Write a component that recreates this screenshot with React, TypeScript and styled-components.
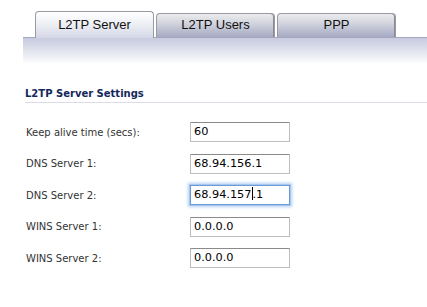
import React from 'react';
import styled, { createGlobalStyle } from 'styled-components';

const GlobalStyle = createGlobalStyle`
  html, body {
    margin: 0;
    padding: 0;
    background: #ffffff;
  }
`;

interface Field {
  label: string;
  value: string;
  focused?: boolean;
}

const fields: Field[] = [
  { label: 'Keep alive time (secs):', value: '60' },
  { label: 'DNS Server 1:', value: '68.94.156.1' },
  { label: 'DNS Server 2:', value: '68.94.157.1', focused: true },
  { label: 'WINS Server 1:', value: '0.0.0.0' },
  { label: 'WINS Server 2:', value: '0.0.0.0' },
];

const tabs = ['L2TP Server', 'L2TP Users', 'PPP'];

const App: React.FC = () => {
  return (
    <Page>
      <GlobalStyle />
      <TabBar>
        {tabs.map((t, i) => (
          <Tab key={t} active={i === 0}>{t}</Tab>
        ))}
      </TabBar>
      <Band />
      <Section>
        <Heading>L2TP Server Settings</Heading>
        <Rows>
          {fields.map((f) => (
            <Row key={f.label}>
              <Label>{f.label}</Label>
              <Input focused={f.focused}>
                {f.focused ? (
                  <>
                    {f.value.slice(0, 9)}
                    <Caret />
                    {f.value.slice(9)}
                  </>
                ) : (
                  f.value
                )}
              </Input>
            </Row>
          ))}
        </Rows>
      </Section>
    </Page>
  );
};

const Page = styled.div`
  width: 427px;
  height: 307px;
  overflow: hidden;
  background: #fff;
`;

const TabBar = styled.div`
  display: flex;
  align-items: flex-end;
  gap: 2px;
  padding: 11px 0 0 35px;
  height: 26px;
`;

const Tab = styled.div<{ active?: boolean }>`
  box-sizing: border-box;
  width: 119px;
  height: ${(p) => (p.active ? 27 : 24)}px;
  margin-bottom: ${(p) => (p.active ? -1 : 0)}px;
  border: 1px solid #9a9aa4;
  border-bottom: none;
  border-radius: 4px 4px 0 0;
  background: ${(p) =>
    p.active
      ? 'linear-gradient(to bottom, #ffffff 0%, #eceef4 50%, #d4d6e6 100%)'
      : 'linear-gradient(to bottom, #ececec 0%, #d2d4de 40%, #a6aac4 100%)'};
  position: relative;
  z-index: ${(p) => (p.active ? 2 : 1)};
  font-family: 'Liberation Sans', Arial, sans-serif;
  font-size: 13px;
  color: #111;
  text-align: center;
  line-height: ${(p) => (p.active ? 25 : 21)}px;
  box-shadow: ${(p) => (p.active ? 'none' : 'inset -1px 0 0 #8a8a96')};
`;

const Band = styled.div`
  margin-left: 23px;
  height: 26px;
  border-top: 1px solid #a4a6bc;
  background: linear-gradient(to bottom, #c8cbe0 0%, #dcdeea 40%, #ffffff 100%);
`;

const Section = styled.div`
  padding: 24px 0 0 25px;
`;

const Heading = styled.div`
  font-family: Tahoma, 'DejaVu Sans', Verdana, sans-serif;
  font-weight: bold;
  font-size: 10px;
  color: #14285a;
  padding-bottom: 3px;
  border-bottom: 1px solid #dcdde4;
`;

const Rows = styled.div`
  display: grid;
  grid-auto-rows: 20px;
  row-gap: 11.5px;
  padding-top: 19px;
`;

const Row = styled.div`
  display: flex;
  align-items: center;
`;

const Label = styled.div`
  width: 164px;
  padding-left: 1px;
  font-family: Tahoma, 'DejaVu Sans', Verdana, sans-serif;
  font-size: 10px;
  color: #333;
`;

const Input = styled.div<{ focused?: boolean }>`
  box-sizing: border-box;
  width: 100px;
  height: 20px;
  padding-left: 3px;
  border: 1px solid #bdbdbd;
  border-top-color: #8a8a8a;
  font-family: 'DejaVu Sans', Verdana, sans-serif;
  font-size: 11.3px;
  line-height: 18px;
  color: #000;
  ${(p) =>
    p.focused &&
    `
    border: 1px solid #6b9ad4;
    box-shadow: 0 0 0 1px #a8c7ec, 0 0 3px 2px #b4d0f0;
  `}
`;

const Caret = styled.span`
  display: inline-block;
  width: 1px;
  height: 13px;
  background: #000;
  vertical-align: -2px;
`;

export default App;
